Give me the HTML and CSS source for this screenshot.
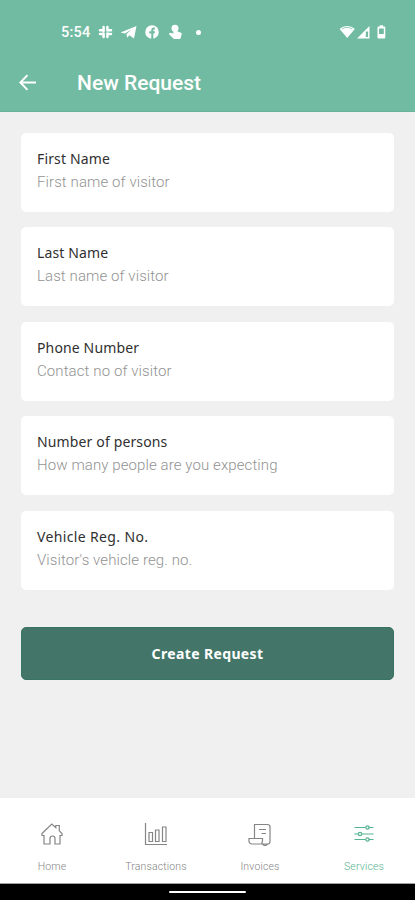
FILE: index.html
```html
<!DOCTYPE html>
<html lang="en">
<head>
<meta charset="utf-8">
<meta name="viewport" content="width=device-width, initial-scale=1">
<title>New Request</title>
<link rel="stylesheet" href="styles.css">
</head>
<body>
<div class="app">
  <header class="header">
    <div class="status">
      <span class="clock">5:54</span>
      <svg class="notifications" width="100" height="16" viewBox="0 0 100 16" fill="#fff">
        <g stroke="#fff" stroke-width="2.5" stroke-linecap="round" fill="none">
          <path d="M5.6 3v4M9.4 9.5V13M9.4 3v3.6M5.6 9.6V13M2 6.3h3M10 6.3h3M2 9.9h3M10 9.9h3"/>
        </g>
        <path d="M22.5 8.4 38.5 2l-2.5 12.5-4.6-3.2-2.3 2.4-.6-3.8 5-4.5-6.5 4z"/>
        <circle cx="54" cy="8" r="6.8"/>
        <path d="M53.3 15V9.5h-2V7.3h2V6c0-2 1.2-2.9 3.6-2.5v1.9c-1.2-.1-1.6.2-1.6 1v.9h1.6l-.3 2.2h-1.3V15z" fill="#71bba2"/>
        <circle cx="77" cy="4.3" r="3.5"/>
        <path d="M75.4 7V3h3.2v4l4.4 1.8c.6.3.8.7.7 1.3l-.8 3.4c-.2.8-.7 1.5-1.4 1.5h-4.7c-.6 0-1-.2-1.4-.6L70.8 10l1.2-1.2 3.4.8z"/>
      </svg>
      <i class="dot"></i>
      <svg class="system" width="48" height="16" viewBox="0 0 48 16" fill="#fff">
        <path d="M.6 5C5 .9 11.4.9 15.8 5L8.2 14z"/>
        <path d="M3 5.2c3.2-2.5 7.2-2.5 10.4 0" fill="none" stroke="#71bba2" stroke-width=".8"/>
        <path d="M18 14.5 30.5 2v12.5z"/>
        <path d="M26.8 7.5h2.3V13h-2.3z" fill="#71bba2"/>
        <path d="M39.5 2.5h1.2V1.3h3.4v1.2h1.2a1 1 0 0 1 1 1v10a1 1 0 0 1-1 1h-5.8a1 1 0 0 1-1-1v-10a1 1 0 0 1 1-1z"/>
        <path d="M40 4.5h4.8V10H40z" fill="#71bba2"/>
      </svg>
    </div>
    <div class="title-bar">
      <svg width="18" height="18" viewBox="0 0 18 18" fill="none" stroke="#fff" stroke-width="1.9"><path d="M18 8.5H2.5M9.5 1.2 2.3 8.5l7.2 7.3"/></svg>
      <h1 class="title">New Request</h1>
    </div>
  </header>
  <main class="form">
    <label class="card"><span class="label">First Name</span><span class="hint">First name of visitor</span></label>
    <label class="card"><span class="label">Last Name</span><span class="hint">Last name of visitor</span></label>
    <label class="card"><span class="label">Phone Number</span><span class="hint">Contact no of visitor</span></label>
    <label class="card"><span class="label">Number of persons</span><span class="hint">How many people are you expecting</span></label>
    <label class="card"><span class="label vehicle">Vehicle Reg. No.</span><span class="hint">Visitor's vehicle reg. no.</span></label>
    <button class="submit">Create Request</button>
  </main>
  <nav class="tabs">
    <a class="tab">
      <svg width="24" height="24" viewBox="0 0 24 24"><path d="M2 11.5 11.8 2l4 3.7V3.5h3.5v5.3L22 11.5v2h-2V22h-5v-5.500a2.5 2.5 0 0 0-5 0V22H4v-8.500H2z"/></svg>
      <span>Home</span>
    </a>
    <a class="tab">
      <svg width="24" height="24" viewBox="0 0 24 24"><path d="M1.5 1v21.5H23M5 10.5h3.5v9H5zM11.5 8H15v11.5h-3.5zM18.5 5H22v14.5h-3.5z"/></svg>
      <span>Transactions</span>
    </a>
    <a class="tab">
      <svg width="24" height="24" viewBox="0 0 24 24"><path d="M6.5 16V2.500h13A2.5 2.5 0 0 1 22 5v14.500a2.5 2.5 0 0 1-2.5 2.500H4a3 3 0 0 1-3-3v-2.500h13.500V19a2.5 2.5 0 0 0 5 3M11 7.500h7M13.500 11.500H18"/></svg>
      <span>Invoices</span>
    </a>
    <a class="tab active">
      <svg width="24" height="24" viewBox="0 0 24 24"><path d="M2.5 5.5h11M16.5 5.5h5M2.5 12h4M9.5 12h12M2.5 17.5h11M16.5 17.5h5"/><circle cx="15.5" cy="5.5" r="1.7"/><circle cx="8" cy="12" r="1.7"/><circle cx="15.5" cy="17.5" r="1.7"/></svg>
      <span>Services</span>
    </a>
  </nav>
  <div class="system-bar"><i class="handle"></i></div>
</div>
</body>
</html>
```
FILE: styles.css
```css
* { box-sizing: border-box; }
body { margin: 0; font-family: Roboto, sans-serif; }
.app { width: 415px; height: 900px; display: flex; flex-direction: column; background: #f0f0f0; overflow: hidden; white-space: nowrap; }
.header { height: 112px; flex: none; background: #71bba2; color: #fff; border-bottom: 1px solid #65b499; }
.status { height: 48px; padding: 16px 28px 0 61px; display: flex; align-items: center; }
.clock { width: 37px; font-size: 14.5px; font-weight: 500; letter-spacing: .2px; }
.dot { width: 5px; height: 5px; margin-left: -2px; border-radius: 50%; background: #fff; }
.system { margin-left: auto; }
.title-bar { height: 70px; padding-left: 18px; display: flex; align-items: center; }
.title { margin: 0 0 0 41px; font-size: 21px; font-weight: 500; }
.form { flex: 1; padding: 20.8px 21px 0; display: flex; flex-direction: column; gap: 15.5px; }
.card { height: 79px; flex: none; padding: 15.9px 16px 0; border-radius: 5px; background: #fff; }
.label, .hint { display: block; width: max-content; }
.label { height: 21px; line-height: 20px; font-family: "Noto Sans", sans-serif; font-size: 14px; letter-spacing: .14px; color: #303030; }
.vehicle { letter-spacing: .36px; }
.hint { height: 24px; line-height: 24px; font-size: 15px; font-weight: 300; letter-spacing: .1px; color: #929292; }
.submit { height: 53px; flex: none; margin-top: 21.7px; padding: 0; border: 1px solid #397361; border-radius: 5px; background: #437669; color: #fff; font: 700 14px "Noto Sans", sans-serif; letter-spacing: .36px; }
.tabs { height: 86px; flex: none; display: grid; grid-template-columns: repeat(4, 104px); background: #fff; border-bottom: 1px solid #a0a0a0; }
.tab { padding-top: 24px; display: flex; flex-direction: column; align-items: center; gap: 12px; color: #858585; font-size: 10.5px; line-height: 17px; font-weight: 300; letter-spacing: .15px; }
.tab svg { fill: none; stroke: currentColor; stroke-width: 1.2; }
.active { color: #56b391; }
.system-bar { height: 16px; flex: none; display: flex; justify-content: center; background: #000; }
.handle { width: 77px; height: 2px; margin-top: 7px; border-radius: 1px; background: #fff; }
```
